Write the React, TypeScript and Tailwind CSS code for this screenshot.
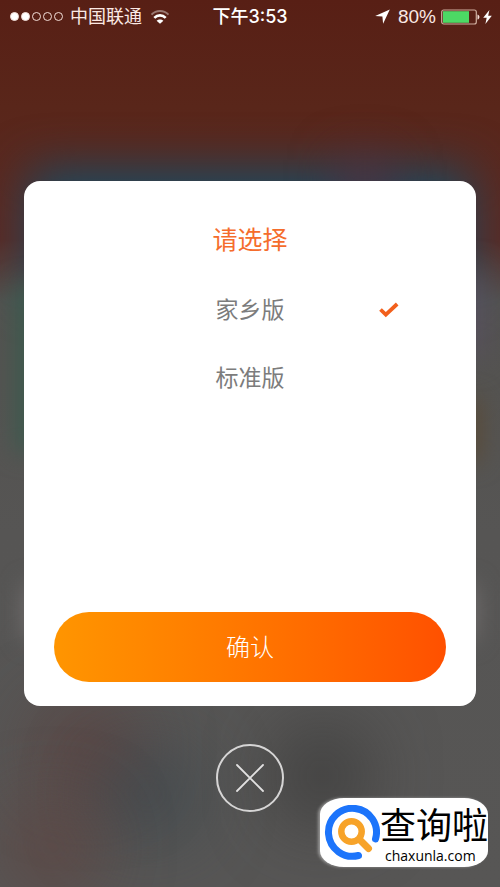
import { useState } from "react";
import { clsx } from "clsx";

const versions = [
  { id: "hometown", label: "家乡版" },
  { id: "standard", label: "标准版" },
];

const signal = [true, true, false, false, false];

const WifiIcon = () => (
  <svg viewBox="0 0 20 14" className="h-[14px] w-5" fill="none" aria-hidden="true">
    <path d="M1.5 4.6C6.3-.2 13.7-.2 18.5 4.6" stroke="#fff" strokeOpacity=".4" strokeWidth="2" />
    <path d="M4.3 7.8c3.2-3.2 8.2-3.2 11.4 0" stroke="#fff" strokeWidth="2.6" />
    <path d="M10 13.8 6.6 10.8c1.9-1.8 4.9-1.8 6.8 0z" fill="#fff" />
  </svg>
);

const StatusBar = () => (
  <header className="relative flex h-[33px] items-center justify-between pr-2 pl-[10px] text-lg text-[#fbe9e4]">
    <div className="flex items-center">
      <div className="flex gap-[2px]">
        {signal.map((on, i) => (
          <span
            key={i}
            className={clsx("size-[9px] rounded-full border border-[#f3ded8]", on && "bg-white")}
          />
        ))}
      </div>
      <span className="ml-[7px] leading-8">中国联通</span>
      <span className="ml-2">
        <WifiIcon />
      </span>
    </div>
    <time className="absolute left-1/2 -translate-x-1/2 font-['Inter','Noto_Sans_CJK_SC',sans-serif] font-medium leading-8 text-white">
      下午3:53
    </time>
    <div className="flex items-center">
      <svg viewBox="0 0 15 15" className="size-[15px]" fill="#fff" aria-hidden="true">
        <path d="M14.8.5.2 7l7.2.6.7 7.2z" />
      </svg>
      <span className="ml-2 text-[19px] leading-8">80%</span>
      <svg viewBox="0 0 39 16" className="ml-[5px] h-4 w-[39px]" aria-hidden="true">
        <rect x=".7" y="1" width="34.6" height="14" rx="2" fill="none" stroke="#cfae9f" strokeWidth="1.2" />
        <rect x="2" y="2.2" width="26" height="11.6" fill="#4cd964" />
        <path d="M36.5 5.4c2.6.8 2.6 4.4 0 5.2z" fill="#f3ded8" />
      </svg>
      <svg viewBox="0 0 9 14" className="ml-[3px] h-[14px] w-[9px]" fill="#fff" aria-hidden="true">
        <path d="M6.4 0 .2 7.8h3.5L2.4 14l6.4-8.2H5.2z" />
      </svg>
    </div>
  </header>
);

// Blurred home screen behind the dialog
const Backdrop = () => (
  <div className="absolute inset-0 -z-10 overflow-hidden bg-[linear-gradient(#581f15_0%,#59261a_12%,#5a2a24_27%,#53524f_34%,#565554_60%,#575655_100%)]">
    <div className="absolute top-[19%] right-[6%] left-[6%] h-[14%] bg-[#1c4a60] blur-xl" />
    <div className="absolute top-[18%] right-[22%] h-[6%] w-[10%] bg-[#50303f] blur-xl" />
    <div className="absolute top-[32%] left-[3%] h-[19%] w-[10%] bg-[#3d5a4e] blur-md" />
    <div className="absolute top-[31%] right-[3%] h-[9%] w-[8%] bg-[#57505e] blur-lg" />
    <div className="absolute top-[45%] right-[4%] h-[7%] w-[6%] bg-[#5a4a35] blur-md" />
    <div className="absolute top-[66%] right-[5%] left-[5%] h-[6%] bg-[#757171] blur-md" />
    <div className="absolute top-[81%] left-[9%] h-[7%] w-[17%] rounded-full bg-[#603835] blur-2xl" />
    <div className="absolute top-[86%] left-[21%] h-[7%] w-[17%] rounded-full bg-[#33424a] blur-2xl" />
    <div className="absolute top-[92%] left-[3%] h-[7%] w-[15%] rounded-full bg-[#643a35] blur-2xl" />
    <div className="absolute top-[83%] left-[58%] h-[9%] w-[13%] rounded-full bg-[#2e2e2e] blur-2xl" />
  </div>
);

const Watermark = () => (
  <aside className="absolute right-3 bottom-5 flex h-[69px] items-center rounded-[24px/16px] bg-white pl-1 text-black shadow-[-2px_0_3px_#ffffff66]">
    <svg viewBox="0 0 56 56" className="size-14" fill="none" strokeLinecap="round" aria-hidden="true">
      <path d="M34.5 50.5A24 24 0 1 1 51.5 34" stroke="#1c74fb" strokeWidth="7" />
      <circle cx="27.5" cy="26.5" r="10.2" stroke="#f7a329" strokeWidth="6.5" />
      <path d="m36 35 8.5 8.5" stroke="#f7a329" strokeWidth="7" />
    </svg>
    <div className="flex flex-col pt-1">
      <span className="text-4xl leading-[42px]">查询啦</span>
      <span className="pl-[5px] font-['Open_Sans','Noto_Sans',sans-serif] text-sm leading-4 font-medium">
        chaxunla.com
      </span>
    </div>
  </aside>
);

export default function App() {
  const [selected, setSelected] = useState("hometown");

  return (
    <div className="relative isolate min-h-screen font-['Liberation_Sans','Noto_Sans_CJK_SC',sans-serif]">
      <Backdrop />
      <StatusBar />

      <main className="flex flex-col items-center px-6 pt-[148px]">
        <form
          className="flex min-h-[525px] w-full flex-col rounded-2xl bg-white px-[30px] pt-[41px] pb-6"
          onSubmit={(e) => e.preventDefault()}
        >
          <fieldset>
            <legend className="w-full text-center text-[25px] leading-9 text-[#f56d2c]">
              请选择
            </legend>
            <div className="mt-[18px]">
              {versions.map((v) => (
                <label
                  key={v.id}
                  className="relative flex h-[68px] cursor-pointer items-center justify-center text-[23px] text-[#7c7c7c]"
                >
                  <input
                    type="radio"
                    name="version"
                    value={v.id}
                    checked={selected === v.id}
                    onChange={() => setSelected(v.id)}
                    className="sr-only"
                  />
                  {v.label}
                  {selected === v.id && (
                    <svg
                      viewBox="0 0 20 16"
                      className="absolute right-[47px] h-4 w-5"
                      fill="none"
                      stroke="#f2601c"
                      strokeWidth="3.8"
                      aria-hidden="true"
                    >
                      <path d="m1.5 7.5 5.3 5.1L18.2 2" />
                    </svg>
                  )}
                </label>
              ))}
            </div>
          </fieldset>

          <button
            type="submit"
            className="mt-auto h-[70px] w-full rounded-full bg-linear-to-r from-[#ff9500] to-[#ff5000] pt-[2px] text-2xl font-light text-white"
          >
            确认
          </button>
        </form>

        <button
          type="button"
          aria-label="关闭"
          className="mt-[38px] flex size-[68px] items-center justify-center rounded-full border-2 border-[#d6d5d5]"
        >
          <svg viewBox="0 0 28 28" className="size-7" stroke="#e2e1e1" strokeWidth="1.8" strokeLinecap="round" aria-hidden="true">
            <path d="m1 1 26 26M27 1 1 27" />
          </svg>
        </button>
      </main>

      <Watermark />
    </div>
  );
}
